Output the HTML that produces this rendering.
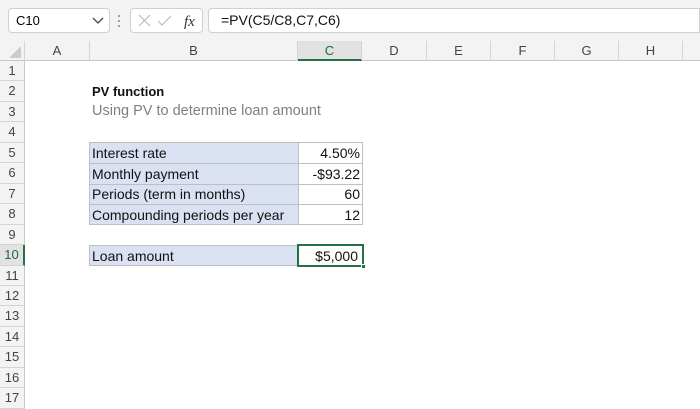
<!DOCTYPE html>
<html><head><style>
body{margin:0;width:700px;height:400px;overflow:hidden;background:#fff;font-family:"Liberation Sans",sans-serif;position:relative}
div{position:absolute;box-sizing:border-box}
.rh{left:0;width:25px;background:#f3f3f3;border-bottom:1px solid #d4d4d4;border-right:1px solid #c8c8c8;color:#444;font-size:13px;text-align:center}
.ch{top:41px;height:20px;background:#f3f3f3;border-right:1px solid #d4d4d4;border-bottom:1px solid #c8c8c8;color:#444;font-size:13px;text-align:center;line-height:20px}
.c{font-size:14px;color:#111;white-space:nowrap}
</style></head><body>
<div style="left:0;top:0;width:700px;height:41px;background:#f3f3f3"></div>
<div style="left:8px;top:8px;width:102px;height:25px;background:#fff;border:1px solid #d0d0d0;border-radius:4px;font-size:13px;line-height:23px;padding-left:7px">C10</div>
<svg style="position:absolute;left:92px;top:17px" width="12" height="8"><path d="M1 1l5 5 5-5" fill="none" stroke="#444" stroke-width="1.3"/></svg>
<svg style="position:absolute;left:117px;top:14px" width="4" height="14"><circle cx="2" cy="2" r="1" fill="#888"/><circle cx="2" cy="7" r="1" fill="#888"/><circle cx="2" cy="12" r="1" fill="#888"/></svg>
<div style="left:130px;top:8px;width:73px;height:25px;background:#fff;border:1px solid #d0d0d0;border-radius:4px"></div>
<svg style="position:absolute;left:137px;top:13px" width="60" height="16"><path d="M2 2l11 11M13 2L2 13" stroke="#bbb" stroke-width="1.2"/><path d="M21 8l4 4 9-9" fill="none" stroke="#bbb" stroke-width="1.2"/><text x="47" y="13" font-family="Liberation Serif" font-style="italic" font-size="15" fill="#333">fx</text></svg>
<div style="left:208px;top:8px;width:492px;height:25px;background:#fff;border:1px solid #d0d0d0;border-radius:4px 0 0 4px;font-size:14px;line-height:23px;padding-left:12px;color:#111">=PV(C5/C8,C7,C6)</div>
<div class="ch" style="left:0;width:25px"><svg width="25" height="20" style="position:absolute;left:0;top:0"><path d="M21 5L21 17L9 17Z" fill="#ccc"/></svg></div>
<div class="ch" style="left:25px;width:65px">A</div>
<div class="ch" style="left:90px;width:208px">B</div>
<div class="ch" style="left:298px;width:64px;background:#e2e2e2;color:#1d6b3a;border-bottom:2px solid #217346">C</div>
<div class="ch" style="left:362px;width:65px">D</div>
<div class="ch" style="left:427px;width:64px">E</div>
<div class="ch" style="left:491px;width:64px">F</div>
<div class="ch" style="left:555px;width:64px">G</div>
<div class="ch" style="left:619px;width:64px">H</div>
<div class="ch" style="left:683px;width:20px"></div>
<script></script>
<div class="rh" style="top:61px;height:20px;line-height:20px">1</div>
<div class="rh" style="top:81px;height:21px;line-height:20px">2</div>
<div class="rh" style="top:102px;height:20px;line-height:20px">3</div>
<div class="rh" style="top:122px;height:21px;line-height:20px">4</div>
<div class="rh" style="top:143px;height:20px;line-height:20px">5</div>
<div class="rh" style="top:163px;height:21px;line-height:20px">6</div>
<div class="rh" style="top:184px;height:20px;line-height:20px">7</div>
<div class="rh" style="top:204px;height:21px;line-height:20px">8</div>
<div class="rh" style="top:225px;height:20px;line-height:20px">9</div>
<div class="rh" style="top:245px;height:21px;line-height:20px;background:#e2e2e2;color:#1d6b3a;border-right:2px solid #217346">10</div>
<div class="rh" style="top:266px;height:20px;line-height:20px">11</div>
<div class="rh" style="top:286px;height:20px;line-height:20px">12</div>
<div class="rh" style="top:306px;height:21px;line-height:20px">13</div>
<div class="rh" style="top:327px;height:20px;line-height:20px">14</div>
<div class="rh" style="top:347px;height:21px;line-height:20px">15</div>
<div class="rh" style="top:368px;height:20px;line-height:20px">16</div>
<div class="rh" style="top:388px;height:21px;line-height:20px">17</div>
<div class="c" style="left:92px;top:82px;font-weight:bold;font-size:13px;line-height:19px">PV function</div>
<div class="c" style="left:92px;top:102px;color:#7f7f7f;font-size:14.5px;line-height:19px">Using PV to determine loan amount</div>
<div style="left:89px;top:142px;width:274px;height:83px;border:1px solid #bfbfbf;background:#fff"></div>
<div style="left:90px;top:143px;width:208px;height:81px;background:#d9e1f2"></div>
<div style="left:298px;top:143px;width:1px;height:81px;background:#bfbfbf"></div>
<div style="left:90px;top:163px;width:272px;height:1px;background:#bfbfbf"></div>
<div style="left:90px;top:184px;width:272px;height:1px;background:#bfbfbf"></div>
<div style="left:90px;top:204px;width:272px;height:1px;background:#bfbfbf"></div>
<div class="c" style="left:92px;top:143px;line-height:20px">Interest rate</div>
<div class="c" style="left:92px;top:164px;line-height:20px">Monthly payment</div>
<div class="c" style="left:92px;top:184px;line-height:20px">Periods (term in months)</div>
<div class="c" style="left:92px;top:205px;line-height:20px">Compounding periods per year</div>
<div class="c" style="left:298px;width:62px;text-align:right;top:143px;line-height:20px">4.50%</div>
<div class="c" style="left:298px;width:62px;text-align:right;top:164px;line-height:20px">-$93.22</div>
<div class="c" style="left:298px;width:62px;text-align:right;top:184px;line-height:20px">60</div>
<div class="c" style="left:298px;width:62px;text-align:right;top:205px;line-height:20px">12</div>
<div style="left:89px;top:245px;width:274px;height:21px;border:1px solid #bfbfbf;background:#fff"></div>
<div style="left:90px;top:246px;width:208px;height:19px;background:#d9e1f2"></div>
<div class="c" style="left:92px;top:246px;line-height:20px">Loan amount</div>
<div style="left:297px;top:244px;width:67px;height:23px;border:2px solid #217346"></div>
<div style="left:361px;top:264px;width:5px;height:5px;background:#217346;border:1px solid #fff"></div>
<div class="c" style="left:298px;width:60px;text-align:right;top:246px;line-height:20px">$5,000</div>
</body></html>
